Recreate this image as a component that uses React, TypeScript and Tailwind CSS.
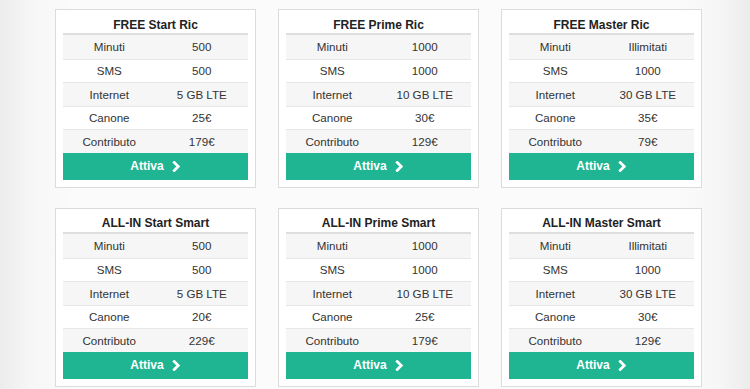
type Plan = {
  name: string;
  rows: [string, string][];
};

const plans: Plan[] = [
  {
    name: 'FREE Start Ric',
    rows: [['Minuti', '500'], ['SMS', '500'], ['Internet', '5 GB LTE'], ['Canone', '25€'], ['Contributo', '179€']],
  },
  {
    name: 'FREE Prime Ric',
    rows: [['Minuti', '1000'], ['SMS', '1000'], ['Internet', '10 GB LTE'], ['Canone', '30€'], ['Contributo', '129€']],
  },
  {
    name: 'FREE Master Ric',
    rows: [['Minuti', 'Illimitati'], ['SMS', '1000'], ['Internet', '30 GB LTE'], ['Canone', '35€'], ['Contributo', '79€']],
  },
  {
    name: 'ALL-IN Start Smart',
    rows: [['Minuti', '500'], ['SMS', '500'], ['Internet', '5 GB LTE'], ['Canone', '20€'], ['Contributo', '229€']],
  },
  {
    name: 'ALL-IN Prime Smart',
    rows: [['Minuti', '1000'], ['SMS', '1000'], ['Internet', '10 GB LTE'], ['Canone', '25€'], ['Contributo', '179€']],
  },
  {
    name: 'ALL-IN Master Smart',
    rows: [['Minuti', 'Illimitati'], ['SMS', '1000'], ['Internet', '30 GB LTE'], ['Canone', '30€'], ['Contributo', '129€']],
  },
];

function Chevron() {
  return (
    <svg viewBox="0 0 10 12" className="w-[9px] h-[11px]" fill="none">
      <path d="M2.5 1.5 L7 6 L2.5 10.5" stroke="white" strokeWidth="3" strokeLinecap="square" />
    </svg>
  );
}

function PlanCard({ plan }: { plan: Plan }) {
  return (
    <div className="w-[201px] bg-white border border-[#dcdcdc] p-[7px]">
      <h3 className="h-[15px] flex items-center justify-center text-[12px] font-bold text-[#222] leading-none">
        {plan.name}
      </h3>
      <div className="mt-[1px] border-t-2 border-[#dedede]">
        {plan.rows.map(([label, value], i) => (
          <div
            key={label}
            className={`grid grid-cols-2 h-[23.6px] items-center text-center text-[11.6px] text-[#333] ${
              i > 0 ? 'border-t border-[#e6e6e6]' : ''
            } ${i % 2 === 0 ? 'bg-[#f6f6f6]' : 'bg-white'}`}
          >
            <span>{label}</span>
            <span>{value}</span>
          </div>
        ))}
      </div>
      <button className="w-full h-[27px] bg-[#1fb592] text-white text-[12px] font-bold flex items-center justify-center gap-[8px]">
        Attiva
        <Chevron />
      </button>
    </div>
  );
}

export default function App() {
  return (
    <div
      className="w-[750px] h-[389px] overflow-hidden bg-[linear-gradient(to_right,#ececec_0%,#f6f6f6_4%,#fbfbfb_10%,#fbfbfb_90%,#f6f6f6_96%,#ececec_100%)]"
      style={{ fontFamily: '"Liberation Sans", Arial, sans-serif' }}
    >
      <div className="pt-[9px] pl-[55px] grid grid-cols-[201px_201px_201px] gap-x-[22px] gap-y-[20px]">
        {plans.map((plan) => (
          <PlanCard key={plan.name} plan={plan} />
        ))}
      </div>
    </div>
  );
}
